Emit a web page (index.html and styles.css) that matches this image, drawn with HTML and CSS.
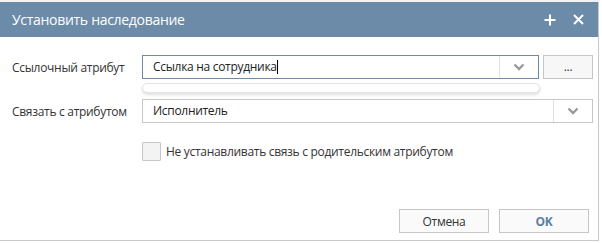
FILE: index.html
```html
<!DOCTYPE html>
<html>
<head>
    <meta charset="utf-8">
    <link rel="stylesheet" href="styles.css">
</head>
<body>
    <div class="backdrop-strip"></div>
    <div class="dialog">
        <div class="dialog-header">
            <span class="dialog-title">Установить наследование</span>
            <div class="header-tools">
                <svg class="tool" width="12" height="12" viewBox="0 0 12 12"><path d="M6 0.5V11.5M0.5 6H11.5" stroke="#fff" stroke-width="2"/></svg>
                <svg class="tool" width="11" height="11" viewBox="0 0 11 11"><path d="M1 1L10 10M10 1L1 10" stroke="#fff" stroke-width="2"/></svg>
            </div>
        </div>

        <div class="dialog-body">
            <div class="form-row">
                <label class="field-label">Ссылочный атрибут</label>
                <div class="field-wrap">
                    <div class="combo combo-focus">
                        <span class="combo-text">Ссылка на сотрудника<span class="caret"></span></span>
                        <span class="combo-arrow">
                            <svg width="12" height="8" viewBox="0 0 12 8"><path d="M1.5 1.5L6 6L10.5 1.5" fill="none" stroke="#9a9a9a" stroke-width="2.4"/></svg>
                        </span>
                    </div>
                    <div class="combo-popup"></div>
                </div>
                <button class="btn btn-dots">...</button>
            </div>

            <div class="form-row">
                <label class="field-label">Связать с атрибутом</label>
                <div class="combo combo-wide">
                    <span class="combo-text">Исполнитель</span>
                    <span class="combo-arrow">
                        <svg width="12" height="8" viewBox="0 0 12 8"><path d="M1.5 1.5L6 6L10.5 1.5" fill="none" stroke="#9a9a9a" stroke-width="2.4"/></svg>
                    </span>
                </div>
            </div>

            <div class="check-row">
                <span class="checkbox"></span>
                <span class="check-text">Не устанавливать связь с родительским атрибутом</span>
            </div>
        </div>

        <div class="dialog-footer">
            <button class="btn btn-footer">Отмена</button>
            <button class="btn btn-footer btn-ok">OK</button>
        </div>
    </div>
</body>
</html>
```

FILE: styles.css
```css
body {
    margin: 0;
    background: #ffffff;
    font-family: "Open Sans", "Noto Sans", sans-serif;
    color: #333;
    letter-spacing: -0.3px;
}
.backdrop-strip {
    height: 2px;
    background: #f2f2f2;
    width: 600px;
}
.dialog {
    width: 598px;
    height: 238px;
    border-right: 1px solid #c9c9c9;
    border-bottom: 1px solid #c9c9c9;
    background: #fff;
    display: flex;
    flex-direction: column;
}
.dialog-header {
    height: 35px;
    background: #6b8ba9;
    display: flex;
    align-items: center;
    justify-content: space-between;
    padding: 0 12px 0 12px;
}
.dialog-title {
    color: #fff;
    font-size: 14px;
}
.header-tools {
    display: flex;
    align-items: center;
    gap: 17px;
    padding-right: 2px;
}
.dialog-body {
    padding: 18px 0 0 12px;
    flex: 1;
}
.form-row {
    display: flex;
    align-items: center;
    height: 24px;
    margin-bottom: 20px;
}
.field-label {
    width: 130px;
    font-size: 12px;
    color: #333;
}
.field-wrap {
    position: relative;
}
.combo {
    box-sizing: border-box;
    height: 24px;
    border: 1px solid #c6c6c6;
    display: flex;
    align-items: stretch;
    background: #fff;
}
.combo-focus {
    width: 397px;
    border-color: #6f8aa3;
}
.combo-wide {
    width: 451px;
}
.combo-text {
    flex: 1;
    font-size: 12px;
    line-height: 22px;
    padding-left: 10px;
    color: #222;
}
.caret {
    display: inline-block;
    width: 1px;
    height: 14px;
    background: #000;
    vertical-align: -3px;
}
.combo-arrow {
    width: 38px;
    border-left: 1px solid #e2e2e2;
    display: flex;
    align-items: center;
    justify-content: center;
}
.combo-popup {
    position: absolute;
    left: 0;
    top: 28px;
    width: 396px;
    height: 8px;
    border: 1px solid #e3e3e3;
    border-radius: 5px;
    background: #fff;
    box-shadow: 0 2px 3px rgba(0, 0, 0, 0.12);
}
.btn {
    font-family: "Open Sans", "Noto Sans", sans-serif;
    letter-spacing: -0.3px;
    background: #f7f7f7;
    border: 1px solid #c6c6c6;
    box-sizing: border-box;
    height: 24px;
    padding: 0;
    color: #333;
}
.btn-dots {
    width: 50px;
    margin-left: 4px;
    font-size: 12px;
    line-height: 18px;
}
.check-row {
    display: flex;
    align-items: center;
    margin-left: 130px;
    margin-top: -1px;
}
.checkbox {
    box-sizing: border-box;
    width: 19px;
    height: 19px;
    border: 1px solid #c6c6c6;
    background: #f3f3f3;
    border-radius: 1px;
}
.check-text {
    margin-left: 5px;
    font-size: 12px;
    color: #333;
}
.dialog-footer {
    display: flex;
    justify-content: flex-end;
    gap: 10px;
    padding: 0 9px 7px 0;
}
.btn-footer {
    width: 90px;
    font-size: 12px;
    background: #fafafa;
}
.btn-ok {
    color: #5b7fa2;
    font-weight: bold;
}
```
